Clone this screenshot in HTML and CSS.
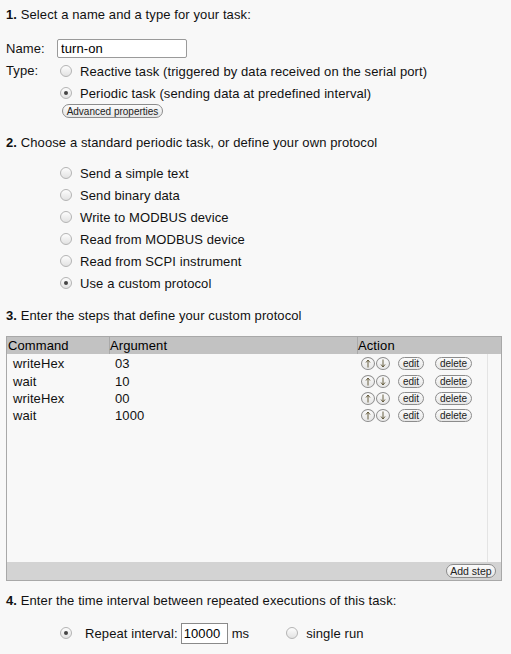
FILE: index.html
```html
<!DOCTYPE html>
<html>
<head>
<meta charset="utf-8">
<link rel="stylesheet" href="styles.css">
</head>
<body>
<div class="page">
  <div class="heading h1"><b>1.</b> Select a name and a type for your task:</div>
  <div class="name-row">
    <span class="lbl">Name:</span>
    <input class="text-in name-in" type="text" value="turn-on">
  </div>
  <div class="type-grid">
    <span class="lbl type-lbl">Type:</span>
    <div class="opts">
      <div class="opt"><span class="radio"></span><span>Reactive task (triggered by data received on the serial port)</span></div>
      <div class="opt"><span class="radio on"></span><span>Periodic task (sending data at predefined interval)</span></div>
    </div>
  </div>
  <div class="adv-row"><span class="pill adv">Advanced properties</span></div>

  <div class="heading h2"><b>2.</b> Choose a standard periodic task, or define your own protocol</div>
  <div class="list">
    <div class="opt"><span class="radio"></span><span>Send a simple text</span></div>
    <div class="opt"><span class="radio"></span><span>Send binary data</span></div>
    <div class="opt"><span class="radio"></span><span>Write to MODBUS device</span></div>
    <div class="opt"><span class="radio"></span><span>Read from MODBUS device</span></div>
    <div class="opt"><span class="radio"></span><span>Read from SCPI instrument</span></div>
    <div class="opt"><span class="radio on"></span><span>Use a custom protocol</span></div>
  </div>

  <div class="heading h3"><b>3.</b> Enter the steps that define your custom protocol</div>
  <div class="grid-box">
    <div class="grid-head">
      <div class="hc c1">Command</div>
      <div class="hc c2">Argument</div>
      <div class="hc c3">Action</div>
    </div>
    <div class="grid-body">
      <div class="rows">
        <div class="row"><div class="c1 dc">writeHex</div><div class="c2 dc">03</div><div class="c3 acts"><span class="circ"><svg width="6" height="9" viewBox="0 0 6 9"><path d="M3 1V8.5M1 3.5L3 1L5 3.5" fill="none" stroke="#5a5030" stroke-width="0.9"/></svg></span><span class="circ"><svg width="6" height="9" viewBox="0 0 6 9"><path d="M3 0.5V8M1 5.5L3 8L5 5.5" fill="none" stroke="#5a5030" stroke-width="0.9"/></svg></span><span class="pill edit">edit</span><span class="pill del">delete</span></div></div>
        <div class="row"><div class="c1 dc">wait</div><div class="c2 dc">10</div><div class="c3 acts"><span class="circ"><svg width="6" height="9" viewBox="0 0 6 9"><path d="M3 1V8.5M1 3.5L3 1L5 3.5" fill="none" stroke="#5a5030" stroke-width="0.9"/></svg></span><span class="circ"><svg width="6" height="9" viewBox="0 0 6 9"><path d="M3 0.5V8M1 5.5L3 8L5 5.5" fill="none" stroke="#5a5030" stroke-width="0.9"/></svg></span><span class="pill edit">edit</span><span class="pill del">delete</span></div></div>
        <div class="row"><div class="c1 dc">writeHex</div><div class="c2 dc">00</div><div class="c3 acts"><span class="circ"><svg width="6" height="9" viewBox="0 0 6 9"><path d="M3 1V8.5M1 3.5L3 1L5 3.5" fill="none" stroke="#5a5030" stroke-width="0.9"/></svg></span><span class="circ"><svg width="6" height="9" viewBox="0 0 6 9"><path d="M3 0.5V8M1 5.5L3 8L5 5.5" fill="none" stroke="#5a5030" stroke-width="0.9"/></svg></span><span class="pill edit">edit</span><span class="pill del">delete</span></div></div>
        <div class="row"><div class="c1 dc">wait</div><div class="c2 dc">1000</div><div class="c3 acts"><span class="circ"><svg width="6" height="9" viewBox="0 0 6 9"><path d="M3 1V8.5M1 3.5L3 1L5 3.5" fill="none" stroke="#5a5030" stroke-width="0.9"/></svg></span><span class="circ"><svg width="6" height="9" viewBox="0 0 6 9"><path d="M3 0.5V8M1 5.5L3 8L5 5.5" fill="none" stroke="#5a5030" stroke-width="0.9"/></svg></span><span class="pill edit">edit</span><span class="pill del">delete</span></div></div>
      </div>
      <div class="scroller"></div>
    </div>
    <div class="grid-foot"><span class="pill add">Add step</span></div>
  </div>

  <div class="heading h4"><b>4.</b> Enter the time interval between repeated executions of this task:</div>
  <div class="interval-row">
    <span class="radio on"></span>
    <span class="rep-lbl">Repeat interval:</span>
    <input class="text-in int-in" type="text" value="10000">
    <span class="ms">ms</span>
    <span class="radio single-radio"></span>
    <span class="single">single run</span>
  </div>
</div>
</body>
</html>
```

FILE: styles.css
```css
html, body {
  margin: 0;
  padding: 0;
  background: #f8f8f8;
}
body {
  font-family: "Liberation Sans", Arial, sans-serif;
  font-size: 13px;
  letter-spacing: 0.1px;
  color: #111;
}
.page {
  padding: 7px 10px 0 6px;
}
.heading {
  line-height: 16px;
  height: 16px;
  white-space: nowrap;
}
.heading b { font-weight: bold; }
.h2 { margin-top: 17px; }
.h3 { margin-top: 14px; }
.h4 { margin-top: 12px; }

.name-row {
  margin-top: 16px;
  display: flex;
  align-items: center;
  height: 19px;
}
.lbl { width: 51px; flex: none; }
.text-in {
  font-family: "Liberation Sans", Arial, sans-serif;
  font-size: 13px;
  letter-spacing: 0.1px;
  color: #000;
  background: #fff;
  border: 1px solid #9a9a9a;
  box-sizing: border-box;
  margin: 0;
  outline: none;
}
.name-in {
  width: 130px;
  height: 19px;
  padding: 0 3px;
  border-radius: 2px;
}

.type-grid {
  display: flex;
  margin-top: 2px;
}
.type-lbl {
  width: 54px;
  line-height: 22px;
  height: 22px;
}
.opts { display: flex; flex-direction: column; }
.opt {
  display: flex;
  align-items: center;
  height: 22px;
  white-space: nowrap;
}
.radio {
  flex: none;
  width: 12px;
  height: 12px;
  border-radius: 50%;
  box-sizing: border-box;
  border: 1px solid #b4b4b4;
  background: linear-gradient(#fdfdfd, #e2e2e2);
  margin-right: 8px;
  position: relative;
}
.radio.on::after {
  content: "";
  position: absolute;
  left: 3px;
  top: 3px;
  width: 4px;
  height: 4px;
  border-radius: 50%;
  background: #444;
}
.adv-row {
  padding-left: 56px;
  margin-top: 0;
  height: 14px;
  display: flex;
}
.pill {
  display: inline-flex;
  align-items: center;
  justify-content: center;
  box-sizing: border-box;
  height: 13px;
  border: 1px solid #8c8c8c;
  border-radius: 7px;
  background: linear-gradient(#fbfbfb, #e6e6e6);
  font-size: 10px;
  letter-spacing: 0;
  color: #222;
  white-space: nowrap;
  padding: 0 3px;
}
.adv { width: 101px; height: 14px; }

.list {
  margin-top: 11px;
  padding-left: 54px;
}

.grid-box {
  margin-top: 12px;
  width: 496px;
  height: 245px;
  box-sizing: border-box;
  border: 1px solid #a8a8a8;
  display: flex;
  flex-direction: column;
  background: #f8f8f8;
}
.grid-head {
  display: flex;
  height: 17px;
  background: #c2c2c2;
  flex: none;
}
.c1 { width: 102px; flex: none; box-sizing: border-box; }
.c2 { width: 248px; flex: none; box-sizing: border-box; }
.c3 { flex: 1; box-sizing: border-box; }
.hc {
  line-height: 17px;
  padding-left: 1px;
  color: #000;
}
.hc.c2, .hc.c3 { border-left: 1px solid #a9a9a9; padding-left: 0; }
.grid-body {
  flex: 1;
  display: flex;
}
.rows {
  flex: 1;
  padding-top: 1px;
  border-right: 1px solid #e4e4e4;
}
.scroller { width: 13px; flex: none; }
.row {
  display: flex;
  height: 17.4px;
  align-items: center;
}
.dc.c1 { padding-left: 6px; }
.dc.c2 { padding-left: 6px; }
.acts {
  display: flex;
  align-items: center;
  padding-left: 4px;
}
.circ {
  display: inline-flex;
  align-items: center;
  justify-content: center;
  box-sizing: border-box;
  width: 14px;
  height: 13px;
  border: 1px solid #8c8c8c;
  border-radius: 50%;
  background: linear-gradient(#fbfbfb, #e6e6e6);
  margin-right: 1px;
}
.circ svg { display: block; }
.edit { width: 26px; margin-left: 7px; }
.del { width: 37px; margin-left: 11px; }
.grid-foot {
  flex: none;
  height: 18px;
  background: #d3d3d3;
  display: flex;
  align-items: center;
  justify-content: flex-end;
  padding-right: 5px;
}
.add { width: 50px; height: 14px; font-size: 10.5px; padding: 0 2px; }

.interval-row {
  margin-top: 13px;
  display: flex;
  align-items: center;
  height: 22px;
  padding-left: 54px;
  white-space: nowrap;
}
.rep-lbl { margin-left: 5px; }
.int-in {
  width: 47px;
  height: 21px;
  padding: 0 2px;
  margin-left: 3px;
  border-color: #8a8a8a;
}
.ms { margin-left: 4px; }
.single-radio { margin-left: 37px; }
.single { margin-left: 0; }
```
